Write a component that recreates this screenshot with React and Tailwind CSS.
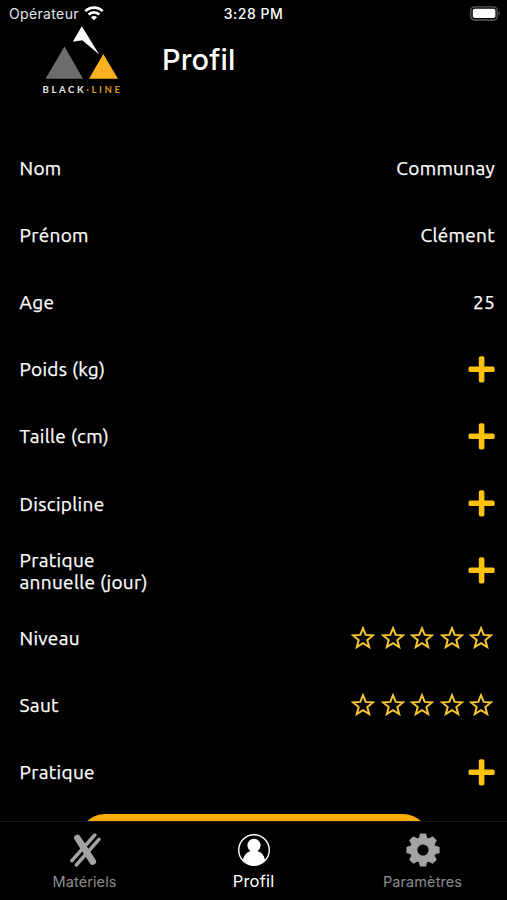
import React, { useState } from "react";

const fields = [
  { label: "Nom", type: "text", value: "Communay" },
  { label: "Prénom", type: "text", value: "Clément" },
  { label: "Age", type: "text", value: "25" },
  { label: "Poids (kg)", type: "add" },
  { label: "Taille (cm)", type: "add" },
  { label: "Discipline", type: "add" },
  { label: "Pratique annuelle (jour)", type: "add" },
  { label: "Niveau", type: "rating" },
  { label: "Saut", type: "rating" },
  { label: "Pratique", type: "add" },
];

const WifiIcon = () => (
  <svg width="20" height="15" viewBox="0 0 20 15" fill="none" stroke="white" strokeWidth="2.7">
    <path d="M1.3 5.1a12.4 12.4 0 0 1 17.4 0" />
    <path d="M4.6 8.6a7.7 7.7 0 0 1 10.8 0" />
    <path d="M10 14.2 6.9 11.2a4.4 4.4 0 0 1 6.2 0Z" fill="white" stroke="none" />
  </svg>
);

const BatteryIcon = () => (
  <svg width="31" height="15" viewBox="0 0 31 15">
    <rect x="0.8" y="0.8" width="26.4" height="13.2" rx="3.6" fill="none" stroke="#5c5c5c" strokeWidth="1.3" />
    <rect x="2.8" y="2.8" width="22.6" height="9.2" rx="1.8" fill="white" />
    <path d="M28.6 5.2v4.4c1.8-.8 1.8-3.6 0-4.4Z" fill="#5c5c5c" />
  </svg>
);

const Logo = () => (
  <svg width="86" height="72" viewBox="40 25 86 72">
    <path d="M64.5 46.5 83 78.8H45.5Z" fill="#6d6d6d" />
    <path d="M103.3 54 118 78.8H89Z" fill="#fcb120" />
    <path d="M81.8 26.2 99.2 54.6 82.2 40.2 72.8 41.8Z" fill="white" />
    <text
      x="42.5"
      y="93.2"
      fontSize="9.6"
      fontWeight="700"
      textLength="77.5"
      className="font-['Lato',sans-serif]"
      fill="#e8e8e8"
    >
      BLACK<tspan fill="#d99a1e">·LINE</tspan>
    </text>
  </svg>
);

const PlusIcon = () => (
  <svg width="27" height="27" viewBox="0 0 27 27" fill="#ffc20c">
    <rect x="10.8" y="0.3" width="5.6" height="26.2" rx="1.9" />
    <rect x="0.5" y="10.5" width="26.2" height="5.6" rx="1.9" />
  </svg>
);

const StarIcon = () => (
  <svg width="24" height="24" viewBox="0 0 24 24" fill="none" stroke="#f5c431" strokeWidth="2">
    <path d="M12 2.2 14.7 8.9 21.9 9.4 16.3 14 18.2 21 12 17.1 5.8 21 7.7 14 2.1 9.4 9.3 8.9Z" />
  </svg>
);

const SkisIcon = () => (
  <svg width="34" height="36" viewBox="0 0 34 36" fill="none" stroke="#a3a3a3" strokeLinecap="round">
    <path d="M3.9 27.6 26.8 2" strokeWidth="3.5" />
    <path d="M8.3 32 31 6.4" strokeWidth="3.5" />
    <path d="M9.4 5 24.8 28.6" strokeWidth="6.6" />
  </svg>
);

const ProfileIcon = () => (
  <svg width="34" height="34" viewBox="0 0 34 34">
    <circle cx="17" cy="17" r="15.3" fill="none" stroke="white" strokeWidth="1.4" />
    <circle cx="17" cy="12.3" r="6.6" fill="white" />
    <path
      d="M13.6 16h6.8v2c4 1.2 6.6 4.2 7.6 8.4A14.8 14.8 0 0 1 17 32.3 14.8 14.8 0 0 1 6 26.4C7 22.2 9.6 19.2 13.6 18Z"
      fill="white"
    />
  </svg>
);

const GearIcon = () => (
  <svg width="34" height="34" viewBox="0 0 34 34" fill="#a3a3a3">
    {[0, 45, 90, 135].map((angle) => (
      <path
        key={angle}
        d="M14.1 0.4h5.8l1.5 5V28.6l-1.5 5h-5.8l-1.5-5V5.4Z"
        transform={`rotate(${angle} 17 17)`}
      />
    ))}
    <circle cx="17" cy="17" r="12.8" />
    <circle cx="17" cy="17" r="5.6" fill="black" />
  </svg>
);

const tabs = [
  { id: "materiels", label: "Matériels", icon: SkisIcon },
  { id: "profil", label: "Profil", icon: ProfileIcon },
  { id: "parametres", label: "Paramètres", icon: GearIcon },
];

const FieldValue = ({ field }) => {
  if (field.type === "add") {
    return (
      <button aria-label={field.label}>
        <PlusIcon />
      </button>
    );
  }
  if (field.type === "rating") {
    return (
      <div className="flex gap-[5.4px] pr-[2px]">
        {[1, 2, 3, 4, 5].map((star) => (
          <StarIcon key={star} />
        ))}
      </div>
    );
  }
  return <span>{field.value}</span>;
};

const App = () => {
  const [activeTab, setActiveTab] = useState("profil");

  return (
    <div className="w-full h-[900px] flex flex-col overflow-hidden bg-black text-white font-['Inter',sans-serif]">
      {/* Status Bar */}
      <div className="h-[25px] shrink-0 grid grid-cols-3 items-center pl-[9px] pr-[6px] pt-[2px] text-[14px]">
        <div className="flex items-center gap-[5px]">
          <span className="text-gray-200 tracking-[0.35px]">Opérateur</span>
          <WifiIcon />
        </div>
        <span className="text-center text-[14px] font-medium tracking-[0.5px] -ml-[3px]">3:28 PM</span>
        <div className="flex justify-end">
          <BatteryIcon />
        </div>
      </div>

      {/* Header */}
      <header className="h-[109px] shrink-0 flex items-start pl-10">
        <Logo />
        <h1 className="ml-9 mt-4 text-[29px] leading-[38px] font-medium tracking-[0.15px]">Profil</h1>
      </header>

      {/* Profile Fields */}
      <main className="flex-1 min-h-0 overflow-hidden">
        <ul className="pl-[19.5px] pr-[12px] font-['Ubuntu','Noto_Sans',sans-serif] text-[19px] tracking-[0.32px] leading-[22px] [-webkit-text-stroke:0.25px_white]">
          {fields.map((field) => (
            <li key={field.label} className="h-[67.2px] flex items-center justify-between">
              <span className="w-[140px]">{field.label}</span>
              <FieldValue field={field} />
            </li>
          ))}
        </ul>
        <button className="block mt-2 mx-auto w-[350px] h-[52px] rounded-[26px] bg-[#ffae00]" aria-label="Valider" />
      </main>

      {/* Tab Bar */}
      <nav className="h-[79px] shrink-0 grid grid-cols-3 border-t border-[#191919] bg-black">
        {tabs.map(({ id, label, icon: Icon }) => (
          <button
            key={id}
            onClick={() => setActiveTab(id)}
            className={`flex flex-col items-center pt-[11px] ${activeTab === id ? "text-white" : "text-[#8c8c8c]"}`}
          >
            <span className="h-[36px] flex items-start">
              <Icon />
            </span>
            <span
              className={
                activeTab === id
                  ? "text-[16.5px] leading-6 tracking-[0.2px]"
                  : "mt-[1px] text-[14.5px] leading-6 tracking-[0.1px]"
              }
            >
              {label}
            </span>
          </button>
        ))}
      </nav>
    </div>
  );
};

export default App;
